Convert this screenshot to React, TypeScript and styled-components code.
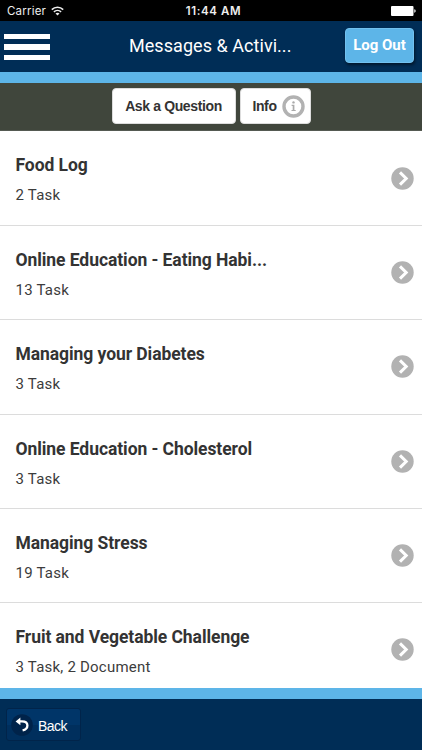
import React from "react";
import styled, { createGlobalStyle } from "styled-components";

const GlobalStyle = createGlobalStyle`
  * { box-sizing: border-box; }
  body { margin: 0; background: #fff; }
  button { font-family: inherit; cursor: pointer; padding: 0; }
`;

const Screen = styled.div`
  display: flex;
  flex-direction: column;
  width: 422px;
  height: 750px;
  overflow: hidden;
  font-family: Roboto, sans-serif;
  background: #fff;
`;

const StatusBar = styled.div`
  flex: none;
  height: 21px;
  display: grid;
  grid-template-columns: 1fr auto 1fr;
  align-items: center;
  padding: 1px 6px 0 7px;
  background: #000;
  color: #eee;
  font-family: Inter, sans-serif;
  font-size: 11.5px;
`;

const Carrier = styled.div`
  display: flex;
  align-items: center;
  gap: 5px;
  letter-spacing: 0.2px;
`;

const Clock = styled.div`
  font-weight: 600;
  letter-spacing: 0.6px;
  padding-left: 4px;
`;

const BatteryIcon = styled.svg`
  justify-self: end;
`;

const Header = styled.header`
  flex: none;
  height: 51px;
  display: flex;
  align-items: center;
  padding: 0 8px 0 4px;
  background: #002d56;
`;

const MenuButton = styled.button`
  width: 46px;
  height: 26px;
  margin-top: 1px;
  border: 0;
  background: none;
  display: flex;
  flex-direction: column;
  justify-content: space-between;
`;

const MenuBar = styled.span`
  width: 46px;
  height: 5.4px;
  background: #fff;
`;

const Title = styled.h1`
  flex: 1;
  margin: -2px 0 0 79px;
  font-size: 18px;
  font-weight: 400;
  letter-spacing: 0.05px;
  line-height: 24px;
  color: #fff;
  white-space: nowrap;
`;

const LogOut = styled.button`
  width: 69px;
  height: 35px;
  margin-top: -3px;
  border: 1px solid #72c1ef;
  border-radius: 4px;
  background: #5db5e8;
  box-shadow: 1px 2px 3px rgba(0, 0, 0, 0.5);
  color: #fff;
  font-size: 15px;
  font-weight: 700;
`;

const Stripe = styled.div`
  flex: none;
  height: 11px;
  background: #5db5e8;
`;

const Toolbar = styled.div`
  flex: none;
  height: 48px;
  display: flex;
  justify-content: center;
  padding-top: 5px;
  gap: 4px;
  background: #40463c;
  border-bottom: 1px solid #555a52;
`;

const ToolButton = styled.button<{ $width: number; $inset?: number }>`
  width: ${(p) => p.$width}px;
  height: 36px;
  display: flex;
  align-items: center;
  justify-content: center;
  gap: 5px;
  padding-left: ${(p) => p.$inset ?? 0}px;
  border: 1px solid #ddd;
  border-radius: 4px;
  background: #fff;
  color: #333;
  font-family: "Liberation Sans", sans-serif;
  font-size: 14px;
  letter-spacing: -0.37px;
  font-weight: 700;
`;

const List = styled.ul`
  flex: 1;
  min-height: 0;
  overflow: hidden;
  margin: 0;
  padding: 0;
  list-style: none;
`;

const Row = styled.li`
  height: 94.3px;
  display: flex;
  align-items: center;
  justify-content: space-between;
  padding: 0 8.5px 0 15.5px;
  border-bottom: 1px solid #dcdcdc;

  &:first-child {
    height: 95px;
  }
`;

const RowText = styled.div`
  padding-top: 2.6px;
`;

const RowTitle = styled.div`
  font-size: 17.5px;
  font-weight: 700;
  letter-spacing: -0.07px;
  line-height: 24px;
  color: #333;
  white-space: nowrap;
`;

const RowDetail = styled.div`
  margin-top: 8px;
  font-size: 15px;
  letter-spacing: 0.22px;
  line-height: 20px;
  color: #3c3c3c;
`;

const Footer = styled.footer`
  flex: none;
  height: 51px;
  padding: 9px 6px;
  background: #002d56;
`;

const BackButton = styled.button`
  width: 75px;
  height: 33px;
  display: flex;
  align-items: center;
  gap: 5px;
  padding: 0 0 0 4px;
  border: 1px solid #01244a;
  border-radius: 3px;
  background: linear-gradient(#003568 50%, #002f5d 50%);
  color: #fff;
  font-family: "Liberation Sans", sans-serif;
  font-size: 14px;
  letter-spacing: -0.5px;
`;

const BackLabel = styled.span`
  padding-top: 3px;
`;

const WifiIcon = () => (
  <svg width="13" height="10" viewBox="0 0 13 10" fill="none" stroke="#eee" strokeWidth="1.6">
    <path d="M.8 3.6a8.2 8.2 0 0 1 11.4 0M2.9 5.9a5.2 5.2 0 0 1 7.2 0" />
    <path d="M4.5 7.6a2.9 2.9 0 0 1 4 0l-2 2z" fill="#eee" stroke="none" />
  </svg>
);

const Battery = () => (
  <BatteryIcon width="25" height="10" viewBox="0 0 25 10" fill="#fff">
    <rect width="22.5" height="10" rx="1" />
    <path d="M23.3 3.3c1.8.3 1.8 3.1 0 3.4z" />
  </BatteryIcon>
);

const InfoIcon = () => (
  <svg width="23" height="23" viewBox="0 0 23 23">
    <circle cx="11.5" cy="11.5" r="9.5" fill="#fff" stroke="#b2b2b2" strokeWidth="3.4" />
    <circle cx="11.5" cy="7.4" r="1.2" fill="#aaa" />
    <path d="M9.6 9.8h2.8v5.2h1.3v1H9.5v-1h1.2v-4.1H9.6z" fill="#aaa" />
  </svg>
);

const Chevron = () => (
  <svg width="23" height="23" viewBox="0 0 23 23">
    <circle cx="11.5" cy="11.5" r="11.2" fill="#b2b2b2" />
    <path d="M9 5.4l6.2 6.1L9 17.6" fill="none" stroke="#fff" strokeWidth="3" />
  </svg>
);

const BackIcon = () => (
  <svg width="22" height="22" viewBox="0 0 22 22">
    <circle cx="11" cy="11" r="10.8" fill="#00234a" />
    <path d="M8 7.4h3c3.2 0 5.4 1.6 5.4 4.1 0 2.5-1.8 4.2-4.8 4.9" fill="none" stroke="#fff" strokeWidth="2.3" />
    <path d="M4.6 7.4l4.8-3.8v7.6z" fill="#fff" />
  </svg>
);

const items = [
  { title: "Food Log", detail: "2 Task" },
  { title: "Online Education - Eating Habi...", detail: "13 Task" },
  { title: "Managing your Diabetes", detail: "3 Task" },
  { title: "Online Education - Cholesterol", detail: "3 Task" },
  { title: "Managing Stress", detail: "19 Task" },
  { title: "Fruit and Vegetable Challenge", detail: "3 Task, 2 Document" },
];

export default function App() {
  return (
    <Screen>
      <GlobalStyle />
      <StatusBar>
        <Carrier>Carrier <WifiIcon /></Carrier>
        <Clock>11:44 AM</Clock>
        <Battery />
      </StatusBar>
      <Header>
        <MenuButton aria-label="Menu">
          <MenuBar />
          <MenuBar />
          <MenuBar />
        </MenuButton>
        <Title>Messages &amp; Activi...</Title>
        <LogOut>Log Out</LogOut>
      </Header>
      <Stripe />
      <Toolbar>
        <ToolButton $width={124}>Ask a Question</ToolButton>
        <ToolButton $width={71} $inset={7}>Info <InfoIcon /></ToolButton>
      </Toolbar>
      <List>
        {items.map((item) => (
          <Row key={item.title}>
            <RowText>
              <RowTitle>{item.title}</RowTitle>
              <RowDetail>{item.detail}</RowDetail>
            </RowText>
            <Chevron />
          </Row>
        ))}
      </List>
      <Stripe />
      <Footer>
        <BackButton>
          <BackIcon />
          <BackLabel>Back</BackLabel>
        </BackButton>
      </Footer>
    </Screen>
  );
}
